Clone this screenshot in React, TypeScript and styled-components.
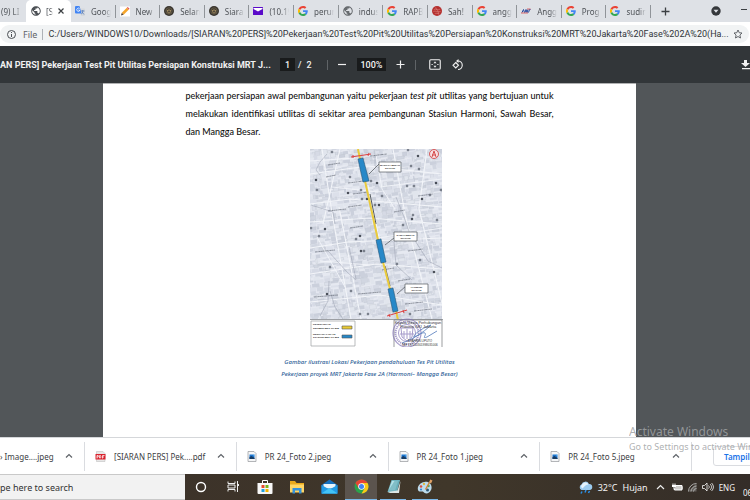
import React from "react";
import styled, { createGlobalStyle, css } from "styled-components";

const ui = `"Noto Sans", "Open Sans", sans-serif`;

const GlobalStyle = createGlobalStyle`
  * { box-sizing: border-box; }
  body { margin: 0; font-family: ${ui}; overflow: hidden; }
  button, input { font: inherit; color: inherit; border: 0; padding: 0; margin: 0; background: none; }
  svg { display: block; flex: none; }
`;

const Screen = styled.div`
  display: flex;
  flex-direction: column;
  height: 100vh;
  overflow: hidden;
`;

/* ---------- browser tabs ---------- */
const TabStrip = styled.header`
  display: flex;
  height: 22px;
  flex: none;
  background: #dee1e6;
  color: #4f5358;
  font-size: 8px;
`;
const LeadingTab = styled.button`
  width: 26px;
  flex: none;
  padding-left: 1px;
  overflow: hidden;
  text-align: left;
  white-space: nowrap;
  mask-image: linear-gradient(to right, #000 50%, transparent 85%);
`;
const ActiveTab = styled.div`
  display: flex;
  align-items: center;
  width: 45px;
  flex: none;
  gap: 5px;
  padding: 0 7px 0 5px;
  background: #fff;
  border-radius: 5px 5px 0 0;
`;
const TabTitle = styled.button`
  flex: 1;
  min-width: 0;
  overflow: hidden;
  text-align: left;
  white-space: nowrap;
  mask-image: linear-gradient(to right, #000 65%, transparent);
`;
const TabRow = styled.div`
  display: grid;
  grid-template-columns: repeat(13, 1fr);
  align-items: center;
  flex: 1;
  min-width: 0;
`;
const Tab = styled.div`
  display: flex;
  align-items: center;
  gap: 6px;
  height: 13px;
  min-width: 0;
  padding: 0 4px;
  border-right: 1px solid #909499;
`;
const StripEnd = styled.div`
  display: flex;
  align-items: center;
  justify-content: space-between;
  width: 99px;
  flex: none;
  padding-left: 10px;
`;
const IconButton = styled.button`
  display: flex;
  align-items: center;
  justify-content: center;
  flex: none;
`;

/* ---------- address bar ---------- */
const AddressRow = styled.div`
  display: flex;
  height: 24px;
  flex: none;
  padding: 3px 0;
  background: #fff;
`;
const AddressPill = styled.label`
  display: flex;
  align-items: center;
  flex: 1;
  min-width: 0;
  margin-right: 1px;
  padding: 0 6px;
  border-radius: 9px;
  background: #f1f3f4;
  color: #5f6368;
  font-size: 9px;
`;
const Scheme = styled.span`
  margin: 0 5px 0 6px;
  padding-right: 5px;
  line-height: 11px;
  border-right: 1px solid #aeb2b7;
`;
const AddressInput = styled.input`
  flex: 1;
  min-width: 0;
  color: #303338;
  font-family: Roboto, sans-serif;
  outline: 0;
`;

/* ---------- pdf viewer ---------- */
const PdfToolbar = styled.div`
  display: flex;
  align-items: center;
  height: 37px;
  flex: none;
  background: #323639;
  color: #f1f1f1;
  font-family: Roboto, sans-serif;
  font-size: 9px;
  font-weight: 500;
`;
const PdfTitle = styled.h1`
  width: 280px;
  flex: none;
  margin: 0;
  font-size: 9px;
  font-weight: 700;
  white-space: nowrap;
`;
const DarkInput = styled.input<{ $wide?: boolean }>`
  width: ${(p) => (p.$wide ? 29 : 15)}px;
  height: 13px;
  background: #191b1c;
  text-align: center;
`;
const PageCount = styled.span`
  display: flex;
  gap: 5px;
  width: 32px;
  padding-left: 3px;
`;
const Divider = styled.i`
  width: 1px;
  height: 10px;
  background: #606467;
`;
const Tools = styled.div`
  display: flex;
  align-items: center;
  gap: 10px;
  flex: 1;
`;
const ViewTools = styled(Tools)`
  padding-left: 3px;
  gap: 11px;
  flex: none;
`;
const DownloadSlot = styled.div`
  display: flex;
  justify-content: flex-end;
  flex: 1;
`;
const Viewer = styled.main`
  display: flex;
  justify-content: center;
  flex: 1;
  min-height: 0;
  padding-right: 11px;
  overflow: hidden;
  background: #525659;
`;
const Sheet = styled.article`
  display: flex;
  flex-direction: column;
  align-items: center;
  width: 72%;
  padding: 3px 82px 0;
  border-top: 1px solid #b0b1b2;
  background: #fff;
  color: #111;
  font-family: Lato, sans-serif;
`;
const Paragraph = styled.p`
  align-self: stretch;
  margin: 0;
  font-size: 9px;
  font-weight: 500;
  line-height: 18px;
  white-space: nowrap;
`;
const Line = styled.span<{ $last?: boolean }>`
  display: block;
  text-align-last: ${(p) => (p.$last ? "left" : "justify")};
`;
const Figure = styled.figure`
  display: flex;
  flex-direction: column;
  align-items: center;
  gap: 9px;
  margin: 8px 0 0;
`;
const MapFrame = styled.div`
  padding-left: 14px;
`;
const Caption = styled.figcaption`
  color: #2f5f98;
  font-family: ${ui};
  font-size: 6px;
  font-style: italic;
  font-weight: 500;
  line-height: 12px;
  text-align: center;
  white-space: nowrap;
`;

/* ---------- downloads ---------- */
const Downloads = styled.section`
  position: relative;
  display: grid;
  grid-template-columns: 85px repeat(4, 1fr) 58px;
  align-items: center;
  height: 37px;
  flex: none;
  background: #fff;
  border-top: 1px solid #d5d7da;
  color: #3c4043;
  font-size: 8px;
`;
const DownloadItem = styled.div<{ $cut?: boolean }>`
  display: flex;
  align-items: center;
  gap: 8px;
  height: 29px;
  min-width: 0;
  padding: 0 11px 0 10px;
  border-right: 1px solid #dadce0;
  ${(p) => p.$cut && css`padding-left: 0;`}
`;
const FileName = styled.button`
  flex: 1;
  min-width: 0;
  text-align: left;
  white-space: nowrap;
`;
const ShowAll = styled.div`
  padding-left: 21px;
  overflow: hidden;
`;
const ShowAllButton = styled.button`
  height: 20px;
  padding: 0 10px;
  border: 1px solid #dadce0;
  border-radius: 3px;
  color: #1a73e8;
  font-size: 8px;
  font-weight: 600;
  white-space: nowrap;
`;
const Watermark = styled.aside`
  position: absolute;
  right: 0;
  bottom: 20px;
  width: 121px;
  overflow: hidden;
  color: rgba(160, 162, 164, 0.85);
  font-size: 9px;
  line-height: 14px;
  white-space: nowrap;
  pointer-events: none;
`;
const WatermarkHead = styled.strong`
  display: block;
  font-size: 12px;
  font-weight: 400;
  line-height: 16px;
`;

/* ---------- taskbar ---------- */
const Taskbar = styled.footer`
  display: flex;
  height: 26px;
  flex: none;
  background: linear-gradient(to right, #3a3029, #40372a 60%, #342d28);
  color: #f4f4f4;
  font-size: 9px;
`;
const Search = styled.input`
  width: 185px;
  border: solid #c9c9c9;
  border-width: 1px 0;
  background: #f2f2f2;
  color: #333;
  font-size: 9px;
  &::placeholder { color: #333; opacity: 1; }
`;
const Apps = styled.nav`
  display: grid;
  grid-template-columns: repeat(8, 32px);
  flex: 1;
`;
const AppButton = styled(IconButton)<{ $open?: boolean; $active?: boolean }>`
  ${(p) => p.$active && css`background: #5b544e;`}
  border-bottom: 1px solid ${(p) => (p.$open ? "#7ab8e8" : "transparent")};
  margin: 0 ${(p) => (p.$open && !p.$active ? 3 : 0)}px;
`;
const Tray = styled.div`
  display: flex;
  align-items: center;
  gap: 5px;
  flex: none;
`;
const Language = styled.span`
  margin-right: 3px;
  font-size: 8px;
`;
const Clock = styled.time`
  align-self: flex-end;
  width: 7px;
  overflow: hidden;
  font-size: 8px;
  line-height: 14px;
`;

/* ---------- icons ---------- */
const Google = () => (
  <svg width="10" height="10" viewBox="0 0 48 48">
    <path fill="#EA4335" d="M24 9.5c3.5 0 6.700 1.200 9.200 3.600l6.900-6.900C35.900 2.400 30.500 0 24 0 14.600 0 6.500 5.400 2.600 13.200l8 6.200C12.400 13.700 17.700 9.500 24 9.500z" />
    <path fill="#4285F4" d="M47 24.500c0-1.600-.2-3.100-.4-4.500H24v9h12.900c-.6 3-2.200 5.500-4.700 7.200l7.700 6C44.400 38 47 31.800 47 24.500z" />
    <path fill="#FBBC05" d="M10.500 28.600a14.500 14.500 0 0 1 0-9.200l-8-6.200a24 24 0 0 0 0 21.600z" />
    <path fill="#34A853" d="M24 48c6.500 0 11.900-2.100 15.900-5.800l-7.700-6c-2.200 1.500-4.900 2.300-8.200 2.300-6.300 0-11.600-4.200-13.500-9.900l-8 6.200C6.500 42.600 14.600 48 24 48z" />
  </svg>
);
const Globe = ({ color }: { color: string }) => (
  <svg width="10" height="10" viewBox="1.500 1.500 21 21">
    <path
      fill={color}
      d="M12 2C6.480 2 2 6.480 2 12s4.480 10 10 10 10-4.480 10-10S17.520 2 12 2zm-1 17.930c-3.950-.49-7-3.850-7-7.930 0-.62.08-1.210.21-1.790L9 15v1c0 1.100.9 2 2 2v1.930zm6.900-2.540c-.26-.81-1-1.390-1.900-1.390h-1v-3c0-.55-.45-1-1-1H8v-2h2c.55 0 1-.45 1-1V7h2c1.100 0 2-.9 2-2v-.41c2.930 1.190 5 4.060 5 7.410 0 2.080-.8 3.970-2.100 5.390z"
    />
  </svg>
);
const Translate = () => (
  <svg width="10" height="10" viewBox="0 0 20 20">
    <path fill="#d5d8dc" d="M8 5h10a2 2 0 0 1 2 2v11a2 2 0 0 1-2 2h-6z" />
    <path fill="#4285f4" d="M2 0h7l4 15H2a2 2 0 0 1-2-2V2a2 2 0 0 1 2-2z" />
    <path fill="none" stroke="#fff" strokeWidth="1.600" d="M9 5a3.300 3.300 0 1 0 0 5V8H6.500" />
    <path fill="none" stroke="#5178b8" strokeWidth="1.500" d="M12 10h7M15.500 8v2c0 3-1 5-3 6M14 12l4 5" />
  </svg>
);
const Pencil = () => (
  <svg width="10" height="11" viewBox="0 0 22 22">
    <path fill="#fff" d="M0 0h22v22H0z" />
    <path fill="#f5a52a" d="M4 14L15 3l4 4L8 18z" />
    <path fill="#e25555" d="M15 3l2-2 4 4-2 2z" />
    <path fill="#54453a" d="M4 14l4 4-6 2z" />
  </svg>
);
const Seal = () => (
  <svg width="10" height="10" viewBox="0 0 22 22">
    <circle cx="11" cy="11" r="11" fill="#39352f" />
    <circle cx="11" cy="11" r="7" fill="none" stroke="#877859" strokeWidth="1.200" />
    <path fill="#a08b60" d="M6 8l3 1 2-3 2 3 3-1-1 6-4 3-4-3z" />
    <path stroke="#39352f" strokeWidth="1.500" d="M11 8v7M8 12h6" />
  </svg>
);
const Mail = () => (
  <svg width="10" height="8" viewBox="0 0 20 16">
    <rect width="20" height="16" rx="1" fill="#5a0ac9" />
    <path fill="#fff" d="M1 2h18v2l-9 5-9-5z" />
  </svg>
);
const RedSeal = () => (
  <svg width="10" height="10" viewBox="0 0 22 22">
    <circle cx="11" cy="11" r="11" fill="#b5302f" />
    <path fill="none" stroke="#dd8f87" strokeWidth="1.200" d="M4 8c4-4 8 3 14-1M3 12c5-3 9 3 16 0M6 17c3-3 7 1 10-1M8 3c2 3 1 5 4 7s1 6 3 9" />
  </svg>
);
const FastMark = () => (
  <svg width="10" height="6" viewBox="0 0 20 12">
    <path fill="none" stroke="#27469a" strokeWidth="2" d="M2 9l3-6 2 6M8 9l2-6 2 6 2-6M15 9l2-6h2" />
    <path stroke="#d74345" strokeWidth="1.500" d="M0 10h14M12 2h7" />
  </svg>
);
const Chevron = ({ color = "#5f6368" }: { color?: string }) => (
  <svg width="8" height="8" viewBox="0 0 8 8">
    <path d="M1 5.500L4 2.500l3 3" fill="none" stroke={color} strokeWidth="1.200" />
  </svg>
);
const ImageFile = () => (
  <svg width="10" height="11" viewBox="0 0 20 22">
    <path d="M2 1h12l4 4v16H2z" fill="#f5f6f7" stroke="#9b9ea2" strokeWidth="1.500" />
    <path d="M5 7h10v9H5z" fill="#1b74cf" />
    <path d="M5 12l4-2 6 4v2H5z" fill="#173b62" />
    <path d="M10 7h5v3z" fill="#7ac3f5" />
  </svg>
);
const PdfFile = () => (
  <svg width="11" height="11" viewBox="0 0 22 22">
    <path d="M4 1h12l4 4v16H3V1z" fill="#e7e7e7" stroke="#b7b7b7" />
    <path d="M1 6h20v11H1z" fill="#d9232e" />
    <path d="M4 15V9h2.500v3H4M9 9v5h2l1-2-1-3zM15 15V9h4M15 12h3" fill="none" stroke="#fff" strokeWidth="1.500" />
  </svg>
);

/* ---------- station map ---------- */
const buildBlocks = () => {
  let seed = 7;
  const rnd = () => ((seed = (seed * 16807) % 2147483647) / 2147483647);
  const shades = ["#d6dae5", "#dce0ea", "#cbd0dc", "#e1e5ed", "#d1d6e1"];
  const blocks: React.ReactNode[] = [];
  for (let y = -30; y < 220; y += 4) {
    let x = -35 + rnd() * 6;
    while (x < 170) {
      const w = 1.5 + rnd() * 6;
      blocks.push(
        <rect key={`${x}${y}`} x={x} y={y + rnd() * 2.5} width={w} height={1.5 + rnd() * 4} fill={shades[Math.floor(rnd() * 5)]} stroke={rnd() > 0.7 ? "#b7bdc9" : "none"} strokeWidth=".3" />
      );
      x += w + rnd();
    }
  }
  return blocks;
};
const blocks = buildBlocks();
const dots = [[40, 28], [51, 41], [67, 34], [61, 32], [52, 50], [57, 50], [72, 47], [65, 56], [69, 56], [7, 41], [22, 3], [6, 31], [97, 37], [101, 17], [108, 7], [104, 37], [98, 1], [126, 34], [109, 20], [103, 66], [102, 70], [93, 76], [46, 90], [50, 87], [1, 79], [9, 87], [15, 80], [127, 71], [131, 41], [112, 50], [20, 118], [41, 142], [17, 145], [50, 165], [58, 165], [51, 102], [54, 102], [110, 111], [124, 123], [87, 115], [100, 165], [38, 44], [120, 46]];
const labels = [[43, 45, 15], [38, 34, 16], [18, 62, 18], [40, 79, 13], [5, 103, 20], [48, 145, 23], [4, 148, 24], [60, 7, 17], [95, 155, 18], [98, 102, 15], [72, 121, 12], [18, 16, 12], [104, 162, 18], [84, 63, 11], [16, 28, 10], [108, 47, 15], [88, 132, 12], [38, 58, 14]];

const StationMap = () => (
  <svg width="133" height="198" viewBox="0 0 133 198" role="img" aria-label="Peta lokasi stasiun">
    <defs><clipPath id="mapArea"><path d="M0 0h132v170H0z" /></clipPath></defs>
    <path d="M0 0h133v198H0z" fill="#fff" />
    <g clipPath="url(#mapArea)">
      <path d="M0 0h132v170H0z" fill="#e6e9f1" />
      <g transform="rotate(-7 66 85)">{blocks}</g>
      <g fill="none" stroke="#f3f5f9" strokeWidth="1.100">
        <path d="M0 25l58-8 74 8M0 55l40-5 92 8M0 73l60-4 72 6M0 99l38-6 94-4M0 125l66-10 66 5M0 153l70-7 62 10M12 0l11 70 18 100M30 0l-17 75M29 58l22 112M83 0l13 70 26 100M117 0l-8 60 23 94M58 36l22 105" />
        <path d="M0 12l45-3M22 38l46 5M70 38l62-8M68 89l64-10M10 112l50 4M65 0l7 40 13 20M7 88l28 50" strokeWidth=".9" />
      </g>
      <g fill="none" stroke="#969dac" strokeWidth=".5">
        <path d="M10 26l-4-5 4-8 7-8M1 56l22 7 2 12M18 102l19 21 9 8M20 142l5 16 8 12M86 48l8 20 7 20M39 98l7 32M84 93l2 23 16 15M65 0v17l12 6M10 167l8-15 1-20M104 90l14 22 14 7" />
      </g>
      {labels.map(([x, y, w]) => <path key={`${x}-${y}`} d={`M${x} ${y}l${w} -2`} stroke="#666c77" strokeWidth=".7" strokeDasharray="2 .4 1 .3" />)}
      {dots.map(([x, y], i) => <circle key={i} cx={x} cy={y} r="1" fill={i % 3 === 2 ? "#20252d" : "#9298a5"} stroke="#454b56" strokeWidth=".5" />)}
      <path d="M60 45l6 30M75 117l5 20" stroke="#555b60" strokeWidth="1" />
      <path d="M48 0l2 10M55 32l13 59M73 113l7 27M86 162l2 9" stroke="#eacb3b" strokeWidth="2" />
      <g fill="#2788c8" stroke="#265878" strokeWidth=".6">
        <path d="M48 10l5-1 6 23-6 1zM66 91l5-1 5 23-5 1zM78 140l5-1 5 23-5 1z" />
      </g>
      <path d="M41 8l20-3M43 9l0-3M58 7l1-3M77 167l20-6M80 168l-1-3M94 164l-1-3" stroke="#dc4141" strokeWidth="1" />
      <path d="M59 25l10-10M75 96l9-7M87 145l9-8" stroke="#30353b" strokeWidth=".6" />
      <g fill="#fff" stroke="#55595f" strokeWidth=".7">
        <path d="M69 13h22v10H69zM84 83h23v9H84zM95 135h23v9H95z" />
      </g>
      <g fill="#222" fontFamily="Liberation Sans" fontWeight="bold" fontSize="2.400" textAnchor="middle">
        <text x="80" y="17">MANGGA BESAR</text><text x="80" y="20">STATION</text>
        <text x="95.500" y="87">SAWAH BESAR</text><text x="95.500" y="90">STATION</text>
        <text x="106.500" y="139">HARMONI</text><text x="106.500" y="142">STATION</text>
      </g>
      <circle cx="124" cy="5" r="4.500" fill="#f7dfe2" stroke="#d54b4b" strokeWidth=".9" />
      <path d="M122 8l2-6 2 6M122 6h4" fill="none" stroke="#d54b4b" />
    </g>
    <path d="M0 170.500h133" stroke="#9c9fa4" />
    <path d="M1 172h44v25H1z" fill="#fff" stroke="#9c9ea0" strokeWidth=".7" />
    <path d="M84 198v-27h48v27" fill="#fff" stroke="#707277" strokeWidth=".7" />
    <g fill="#222" fontFamily="Liberation Sans" fontWeight="bold" fontSize="2.500">
      <text x="3" y="176">KETERANGAN</text>
      <text x="3" y="180">SEGMEN MRT CP 202</text>
      <text x="3" y="186">RENCANA LOKASI</text>
      <text x="3" y="189">STASIUN MRT CP 202</text>
    </g>
    <path d="M32 177h10v3H32z" fill="#e9ca36" stroke="#555" strokeWidth=".6" />
    <path d="M32 186h10v3H32z" fill="#2788c8" stroke="#555" strokeWidth=".6" />
    <g fill="none" stroke="#8072b5" opacity=".7">
      <circle cx="97" cy="184" r="14" strokeWidth="1.200" />
      <circle cx="97" cy="184" r="11.500" strokeWidth="2" strokeDasharray="1.200 .8" />
      <circle cx="97" cy="184" r="8.500" />
      <path d="M91 179h12l-1 9-5 4-5-4zM94 182v7M97 180v10M100 182v7M90 185h14" />
    </g>
    <path d="M92 194c9-3 21-10 29-18-6 2-15 7-17 11s9-5 11-3-4 6 2 4l10-6" fill="none" stroke="#6488c2" strokeWidth=".9" />
    <g fill="#333" fontFamily="Liberation Sans" fontSize="4" textAnchor="middle">
      <text x="108" y="175" fontSize="3.800">Kepala Dinas Perhubungan</text>
      <text x="108" y="179">Provinsi DKI Jakarta</text>
      <text x="110" y="193" fontSize="3">SYAFRIN LIPUTO</text>
      <text x="110" y="197" fontSize="3">NIP 197110301998031006</text>
    </g>
  </svg>
);

const tabs: [string, React.ReactNode][] = [
  ["Goog", <Translate />], ["New", <Pencil />], ["Selan", <Seal />], ["Siarar", <Seal />],
  ["(10.19", <Mail />], ["perur", <Google />], ["indus", <Globe color="#686c70" />], ["RAPB", <Google />],
  ["Sah!", <RedSeal />], ["angg", <Google />], ["Angg", <FastMark />], ["Prog", <Google />], ["sudir", <Google />],
];
const files: [string, React.ReactNode][] = [
  ["[SIARAN PERS] Pek....pdf", <PdfFile />], ["PR 24_Foto 2.jpeg", <ImageFile />],
  ["PR 24_Foto 1.jpeg", <ImageFile />], ["PR 24_Foto 5.jpeg", <ImageFile />],
];

export default function App() {
  return (
    <Screen>
      <GlobalStyle />
      <TabStrip>
        <LeadingTab>(9) LI</LeadingTab>
        <ActiveTab>
          <Globe color="#4d5156" />
          <TabTitle>[S</TabTitle>
          <IconButton aria-label="Close tab">
            <svg width="6" height="6" viewBox="0 0 6 6"><path d="M.5.5l5 5M5.500.5l-5 5" stroke="#3c4043" strokeWidth="1.200" /></svg>
          </IconButton>
        </ActiveTab>
        <TabRow>
          {tabs.map(([name, icon], i) => <Tab key={i}>{icon}<TabTitle>{name}</TabTitle></Tab>)}
        </TabRow>
        <StripEnd>
          <IconButton aria-label="New tab">
            <svg width="9" height="9" viewBox="0 0 9 9"><path d="M4.500.5v8M.5 4.500h8" stroke="#3c4043" strokeWidth="1.300" /></svg>
          </IconButton>
          <IconButton aria-label="Search tabs">
            <svg width="50" height="10" viewBox="0 0 50 10"><circle cx="35" cy="5" r="4.700" fill="#34373b" /><path d="M32.500 3.800h5L35 6.800z" fill="#dee1e6" /></svg>
          </IconButton>
          <IconButton aria-label="Minimize">
            <svg width="9" height="5" viewBox="0 0 9 5"><path d="M0 .5h6" stroke="#3c4043" /></svg>
          </IconButton>
        </StripEnd>
      </TabStrip>
      <AddressRow>
        <AddressPill>
          <svg width="11" height="11" viewBox="0 0 11 11"><circle cx="5.500" cy="5.500" r="4" fill="none" stroke="#4b4f54" /><path d="M5.500 5v3M5.500 3v1" stroke="#4b4f54" /></svg>
          <Scheme>File</Scheme>
          <AddressInput aria-label="Address" readOnly value="C:/Users/WINDOWS10/Downloads/[SIARAN%20PERS]%20Pekerjaan%20Test%20Pit%20Utilitas%20Persiapan%20Konstruksi%20MRT%20Jakarta%20Fase%202A%20(Ha..." />
          <svg width="10" height="10" viewBox="0 0 20 20"><path d="M10 2l2.500 5.500 5.500.5-4.200 4 1.200 6-5-3-5 3 1.200-6L2 8l5.500-.5z" fill="none" stroke="#4b4f54" strokeWidth="1.700" /></svg>
        </AddressPill>
      </AddressRow>
      <PdfToolbar>
        <PdfTitle>AN PERS] Pekerjaan Test Pit Utilitas Persiapan Konstruksi MRT J...</PdfTitle>
        <DarkInput aria-label="Page" defaultValue="1" />
        <PageCount><span>/</span><span>2</span></PageCount>
        <Tools>
          <Divider />
          <IconButton aria-label="Zoom out"><svg width="9" height="9" viewBox="0 0 9 9"><path d="M0 4.500h8" stroke="#f1f1f1" strokeWidth="1.200" /></svg></IconButton>
          <DarkInput $wide aria-label="Zoom" defaultValue="100%" />
          <IconButton aria-label="Zoom in"><svg width="9" height="9" viewBox="0 0 9 9"><path d="M.5 4.500h8M4.500.5v8" stroke="#f1f1f1" strokeWidth="1.200" /></svg></IconButton>
          <Divider />
          <ViewTools>
            <IconButton aria-label="Fit to page">
              <svg width="12" height="11" viewBox="0 0 24 22"><rect x="1.500" y="1.500" width="21" height="19" rx="2" fill="none" stroke="#f1f1f1" strokeWidth="2.200" /><path d="M12 4.500l3 4H9zM12 17.500l3-4H9zM5 10h2.500v2H5zM16.500 10H19v2h-2.500z" fill="#f1f1f1" /></svg>
            </IconButton>
            <IconButton aria-label="Rotate">
              <svg width="12" height="12" viewBox="0 0 24 24"><path d="M7.500 7L13 12.500 7.500 18 2 12.500zM12 4a8.500 8.500 0 1 1 0 17" fill="none" stroke="#f1f1f1" strokeWidth="2.200" /><path d="M13 0v8L8 4z" fill="#f1f1f1" /></svg>
            </IconButton>
          </ViewTools>
          <DownloadSlot>
            <IconButton aria-label="Download"><svg width="9" height="11" viewBox="0 0 9 11"><path d="M3 1h3v3h3L4.500 8 0 4h3zM1 9h8v1.300H1z" fill="#f1f1f1" /></svg></IconButton>
          </DownloadSlot>
        </Tools>
      </PdfToolbar>
      <Viewer>
        <Sheet>
          <Paragraph>
            <Line>pekerjaan persiapan awal pembangunan yaitu pekerjaan <em>test pit</em> utilitas yang bertujuan untuk</Line>
            <Line>melakukan identifikasi utilitas di sekitar area pembangunan Stasiun Harmoni, Sawah Besar,</Line>
            <Line $last>dan Mangga Besar.</Line>
          </Paragraph>
          <Figure>
            <MapFrame><StationMap /></MapFrame>
            <Caption>
              Gambar ilustrasi Lokasi Pekerjaan pendahuluan Tes Pit Utilitas<br />
              Pekerjaan proyek MRT Jakarta Fase 2A (Harmoni– Mangga Besar)
            </Caption>
          </Figure>
        </Sheet>
      </Viewer>
      <Downloads>
        <DownloadItem $cut>
          <FileName>› Image....jpeg</FileName>
          <IconButton aria-label="Options"><Chevron /></IconButton>
        </DownloadItem>
        {files.map(([name, icon]) => (
          <DownloadItem key={name}>
            {icon}
            <FileName>{name}</FileName>
            <IconButton aria-label={`Options for ${name}`}><Chevron /></IconButton>
          </DownloadItem>
        ))}
        <ShowAll><ShowAllButton>Tampilkan</ShowAllButton></ShowAll>
        <Watermark>
          <WatermarkHead>Activate Windows</WatermarkHead>
          Go to Settings to activate Windows.
        </Watermark>
      </Downloads>
      <Taskbar>
        <Search aria-label="Search" placeholder="pe here to search" />
        <Apps>
          <AppButton aria-label="Cortana"><svg width="12" height="12" viewBox="0 0 12 12"><circle cx="6" cy="6" r="4.500" fill="none" stroke="#fff" strokeWidth="1.400" /></svg></AppButton>
          <AppButton aria-label="Task view"><svg width="12" height="11" viewBox="0 0 12 11"><path d="M1 .5v2h7v-2M1 10.500v-2h7v2M1 4h7v3H1zM10.500 0v3M10.500 5v6" fill="none" stroke="#eee" /><path d="M10 3h2v2h-2z" fill="#eee" /></svg></AppButton>
          <AppButton aria-label="Store"><svg width="16" height="16" viewBox="0 0 32 32"><path d="M11 8V3h10v5" fill="none" stroke="#fff" strokeWidth="2" /><path d="M1 8h30v20a2 2 0 0 1-2 2H3a2 2 0 0 1-2-2z" fill="#f8f8f8" /><path d="M9 12h6v6H9z" fill="#e64b2e" /><path d="M17 12h6v6h-6z" fill="#79b51c" /><path d="M9 20h6v6H9z" fill="#20a0df" /><path d="M17 20h6v6h-6z" fill="#f5b300" /></svg></AppButton>
          <AppButton aria-label="Files"><svg width="16" height="14" viewBox="0 0 32 28"><path d="M2 2h10l3 4h15v18H2z" fill="#e9a91d" /><path d="M2 9h28v16H2z" fill="#ffd666" /><path d="M7 27V16h18v11h-5v-6h-8v6z" fill="#3592db" /></svg></AppButton>
          <AppButton aria-label="Mail"><svg width="17" height="15" viewBox="0 0 34 30"><path d="M1 12L17 1l16 11v17H1z" fill="#1670bd" /><path d="M5 10h24v9H5z" fill="#e8f5fc" /><path d="M1 12l16 9 16-9v17H1z" fill="#219be5" /><path d="M1 29l16-11 16 11z" fill="#43c3f5" /></svg></AppButton>
          <AppButton aria-label="Chrome" $open $active>
            <svg width="15" height="15" viewBox="0 0 30 30"><circle cx="15" cy="15" r="14" fill="#2ba24c" /><path d="M2.900 8A14 14 0 0 1 27.100 8L15 15z" fill="#e64435" /><path d="M15 8h12.100A14 14 0 0 1 15 29l6-10z" fill="#fbc916" /><path d="M2.900 8L9 18.500l6-10.500z" fill="#e64435" /><circle cx="15" cy="15" r="6.500" fill="#fff" /><circle cx="15" cy="15" r="5" fill="#4285f4" /></svg>
          </AppButton>
          <AppButton aria-label="Notepad" $open><svg width="15" height="15" viewBox="0 0 30 30"><path d="M11 2h17l-6 24H3z" fill="#70b6c2" /><path d="M12 4h12l-6 19H5z" fill="#b5e2e8" /><path d="M17 4h10l-6 20H4z" fill="#65aab5" opacity=".65" /><path d="M3 26l20-3 6-19-3 24H8z" fill="#dce6e5" /></svg></AppButton>
          <AppButton aria-label="Paint" $open><svg width="16" height="16" viewBox="0 0 32 32"><path d="M15 6C6 7 0 15 2 22c2 6 8 1 11 4 2 3 7 4 11 1 6-4 7-13 2-18-3-3-7-4-11-3z" fill="#bddced" /><circle cx="8" cy="15" r="2.500" fill="#d94e3d" /><circle cx="14" cy="10" r="2.300" fill="#e2b63c" /><circle cx="8" cy="21" r="2.200" fill="#3d87cf" /><circle cx="23" cy="14" r="2.500" fill="#48a862" /><circle cx="21" cy="22" r="3" fill="#2e5574" /><path d="M26 5l-9 16" stroke="#d48336" strokeWidth="3" /><path d="M25 7l1-6 5 2-3 6z" fill="#e1a266" /></svg></AppButton>
        </Apps>
        <Tray>
          <svg width="15" height="15" viewBox="0 0 30 30"><path d="M7 20a6 6 0 0 1 0-11 8 8 0 0 1 15-1 6 6 0 0 1 1 12z" fill="#9cccf0" /><path d="M9 17a5 5 0 0 1 0-9 7 7 0 0 1 12 1c-5 0-7 3-12 8z" fill="#e6f4fd" /><path d="M8 23l-2 4M16 20l-2 5M23 22l-2 4" stroke="#2b91ea" strokeWidth="3" /></svg>
          <span>32°C</span>
          <span>Hujan</span>
          <IconButton aria-label="Hidden icons"><svg width="14" height="8" viewBox="0 0 14 8"><path d="M4 6l3.500-3.500L11 6" fill="none" stroke="#eee" strokeWidth="1.200" /></svg></IconButton>
          <svg width="11" height="9" viewBox="0 0 22 18"><path d="M8 5h12v9H5v-3" fill="#cfcdcb" stroke="#fff" strokeWidth="2" /><path d="M21 7h1v5h-1zM1 1h2v3h2V1h2v3h1v4H5v5H3V8H0V4h1z" fill="#fff" /></svg>
          <svg width="9" height="9" viewBox="0 0 18 18"><path d="M1 17A16 16 0 0 1 17 1M6 17A11 11 0 0 1 17 6M11 17a6 6 0 0 1 6-6" fill="none" stroke="#bbb" strokeWidth="1.800" /><path d="M1 17L17 1v16z" fill="#aaa" opacity=".4" /></svg>
          <svg width="12" height="10" viewBox="0 0 24 20"><path d="M1 7h4l5-5v16l-5-5H1zM13 7c2 2 2 4 0 6M16 4c4 4 4 8 0 12M19 2c5 5 5 11 0 16" fill="none" stroke="#eee" strokeWidth="1.700" /></svg>
          <Language>ENG</Language>
          <Clock>06.30</Clock>
        </Tray>
      </Taskbar>
    </Screen>
  );
}
